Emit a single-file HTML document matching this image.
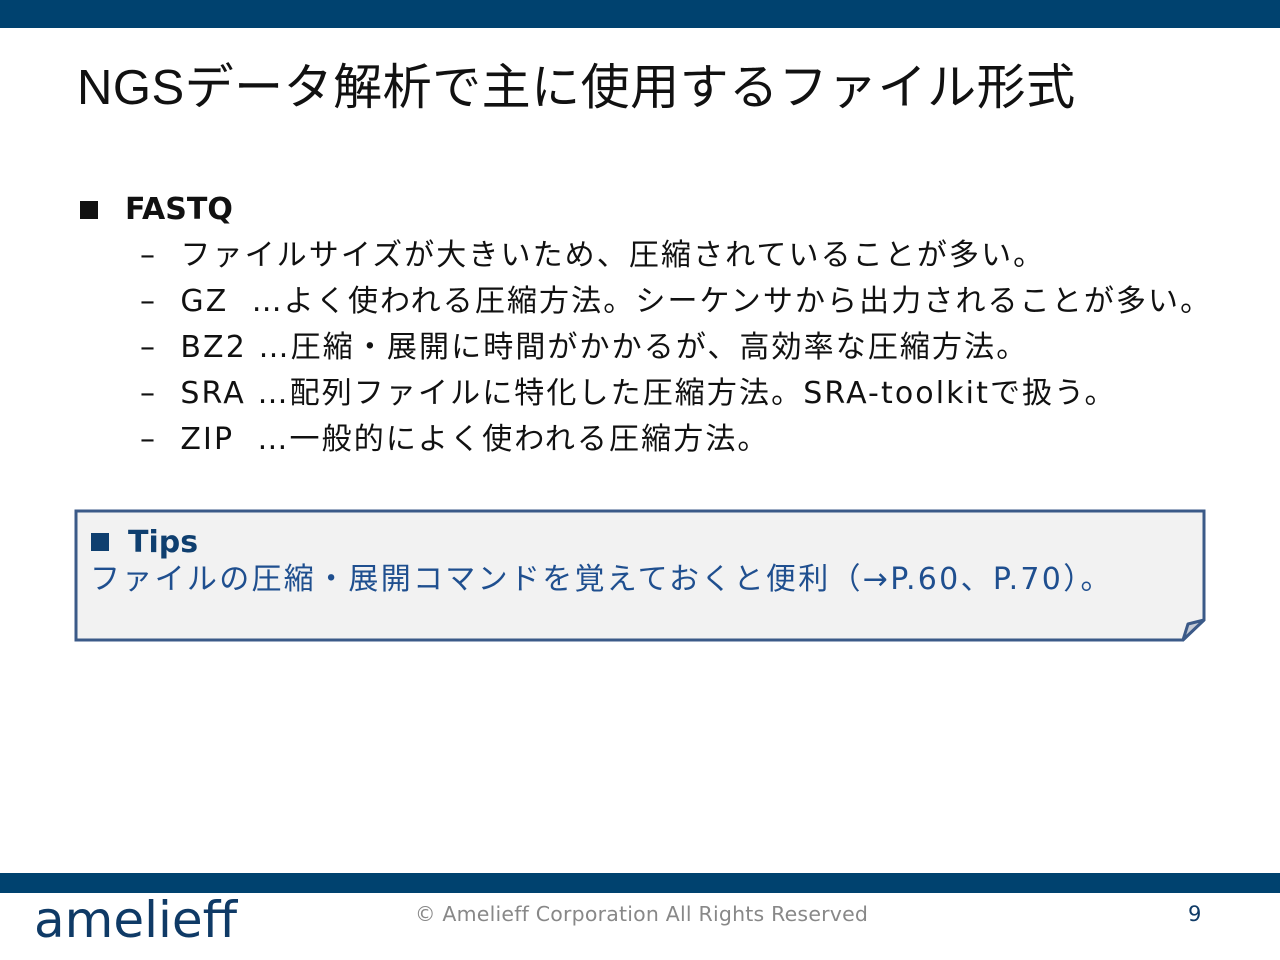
<!DOCTYPE html>
<html><head><meta charset="utf-8"><style>
body{margin:0;width:1280px;height:960px;position:relative;background:#fff;font-family:"DejaVu Sans","Noto Sans CJK JP",sans-serif;color:#111;overflow:hidden}
.a{position:absolute;white-space:nowrap}
.l{font-size:30px;line-height:46px;letter-spacing:2.1px}
</style></head><body>
<div class="a" style="left:0;top:0;width:1280px;height:28px;background:#00426f"></div>
<div class="a" style="left:77px;top:56px;font-size:49px;line-height:64px;letter-spacing:0.5px;font-family:'Liberation Sans','Noto Sans CJK JP',sans-serif">NGSデータ解析で主に使用するファイル形式</div>
<div class="a" style="left:80px;top:201px;width:18px;height:18px;background:#111"></div>
<div class="a l" style="left:125px;top:187px;font-weight:bold;letter-spacing:0">FASTQ</div>
<div class="a l" style="left:140px;top:233px">–&nbsp;&nbsp;ファイルサイズが大きいため、圧縮されていることが多い。</div>
<div class="a l" style="left:140px;top:279px">–&nbsp;&nbsp;GZ&nbsp;&nbsp;…よく使われる圧縮方法。シーケンサから出力されることが多い。</div>
<div class="a l" style="left:140px;top:325px">–&nbsp;&nbsp;BZ2&nbsp;…圧縮・展開に時間がかかるが、高効率な圧縮方法。</div>
<div class="a l" style="left:140px;top:371px">–&nbsp;&nbsp;SRA&nbsp;…配列ファイルに特化した圧縮方法。SRA-toolkitで扱う。</div>
<div class="a l" style="left:140px;top:417px">–&nbsp;&nbsp;ZIP&nbsp;&nbsp;…一般的によく使われる圧縮方法。</div>
<svg class="a" style="left:0;top:0" width="1280" height="960">
<path d="M76 511 H1204 V620 L1183 640 H76 Z" fill="#f2f2f2" stroke="#3b5a88" stroke-width="3"/>
<path d="M1183 640 L1188 624 L1204 620 Z" fill="#c5cbd6" stroke="#3b5a88" stroke-width="3" stroke-linejoin="round"/>
</svg>
<div class="a" style="left:91px;top:533px;width:18px;height:18px;background:#0f3f6f"></div>
<div class="a l" style="left:128px;top:520px;font-weight:bold;color:#0f3f6f;letter-spacing:0">Tips</div>
<div class="a l" style="left:90px;top:557px;color:#1f4f8f;letter-spacing:2.3px">ファイルの圧縮・展開コマンドを覚えておくと便利（→P.60、P.70）。</div>
<div class="a" style="left:0;top:873px;width:1280px;height:20px;background:#00426f"></div>
<div class="a" style="left:34px;top:888px;font-size:50px;line-height:64px;color:#0f3a66;font-family:'DejaVu Sans ExtraLight','DejaVu Sans',sans-serif;letter-spacing:0">amelieff</div>
<div class="a" style="left:415px;top:900px;font-size:20.5px;line-height:28px;color:#888;letter-spacing:0.2px">© Amelieff Corporation All Rights Reserved</div>
<div class="a" style="left:1188px;top:900px;font-size:21px;line-height:28px;color:#0f3a66">9</div>
</body></html>
